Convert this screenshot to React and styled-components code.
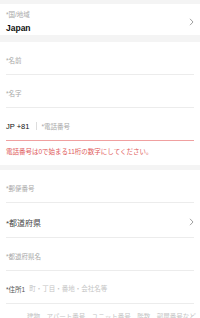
import React from "react";
import styled, { createGlobalStyle } from "styled-components";

const COLORS = {
  band: "#f4f4f4",
  line: "#ececec",
  label: "#a8a8a8",
  text: "#111",
  dark: "#444",
  placeholder: "#c4c4c4",
  red: "#e05a5a",
  redLine: "#f0a0a0",
};

const FONT = `"Liberation Sans", "Noto Sans CJK JP", sans-serif`;

const GlobalStyle = createGlobalStyle`
  html, body {
    margin: 0;
    padding: 0;
    background: #fff;
    font-family: ${FONT};
  }
`;

const Page = styled.div`
  width: 200px;
  height: 318px;
  overflow: hidden;
  background: #fff;
`;

const Band = styled.div`
  height: ${(p) => p.size}px;
  background: ${COLORS.band};
`;

const Section = styled.div`
  padding: 0 6px;
  background: #fff;
`;

const SelectRow = styled.div`
  display: flex;
  align-items: center;
  justify-content: space-between;
  height: 31px;
  padding-top: 5px;
  box-sizing: border-box;
`;

const Stack = styled.div`
  display: flex;
  flex-direction: column;
  gap: 4px;
`;

const SmallLabel = styled.span`
  font-size: 6.5px;
  line-height: 8px;
  color: ${COLORS.label};
`;

const Value = styled.span`
  font-size: 8.5px;
  line-height: 10px;
  font-weight: bold;
  color: ${COLORS.text};
`;

const Field = styled.div`
  display: flex;
  align-items: ${(p) => (p.top ? "flex-start" : "center")};
  gap: ${(p) => p.gap || 0}px;
  height: ${(p) => p.h || 33}px;
  padding-top: ${(p) => (p.top ? 9 : 4)}px;
  box-sizing: border-box;
  border-bottom: 1px solid ${(p) => (p.error ? COLORS.redLine : COLORS.line)};
`;

const Label = styled.span`
  font-size: ${(p) => (p.big ? 8 : 6.5)}px;
  color: ${(p) => (p.big ? COLORS.dark : p.mid ? "#555" : COLORS.label)};
  white-space: nowrap;
`;

const Placeholder = styled.span`
  font-size: 6.5px;
  line-height: 8px;
  color: ${COLORS.placeholder};
  white-space: nowrap;
  padding-left: ${(p) => p.indent || 0}px;
`;

const Prefix = styled.span`
  font-size: 7.5px;
  color: ${COLORS.text};
`;

const Divider = styled.span`
  width: 1px;
  height: 8px;
  background: #ddd;
  margin: 0 4px 0 7px;
`;

const Spacer = styled.div`
  flex: 1;
`;

const ErrorText = styled.div`
  font-size: 6.5px;
  color: ${COLORS.red};
  padding: 5px 0 9px;
  white-space: nowrap;
`;

const Chevron = () => (
  <svg width="5" height="8" viewBox="0 0 5 8" fill="none">
    <path d="M1 0.8 L4 4 L1 7.2" stroke="#888" strokeWidth="0.8" />
  </svg>
);

export default function App() {
  return (
    <>
      <GlobalStyle />
      <Page>
        <Band size={4} />
        <Section>
          <SelectRow>
            <Stack>
              <SmallLabel>*国/地域</SmallLabel>
              <Value>Japan</Value>
            </Stack>
            <Chevron />
          </SelectRow>
        </Section>
        <Band size={7} />
        <Section>
          <Field>
            <Label>*名前</Label>
          </Field>
          <Field>
            <Label>*名字</Label>
          </Field>
          <Field error h={33}>
            <Prefix>JP +81</Prefix>
            <Divider />
            <Label>*電話番号</Label>
          </Field>
          <ErrorText>電話番号は0で始まる11桁の数字にしてください。</ErrorText>
        </Section>
        <Band size={5} />
        <Section>
          <Field>
            <Label>*郵便番号</Label>
          </Field>
          <Field h={35}>
            <Label big>*都道府県</Label>
            <Spacer />
            <Chevron />
          </Field>
          <Field>
            <Label>*都道府県名</Label>
          </Field>
          <Field gap={4}>
            <Label mid>*住所1</Label>
            <Placeholder>町・丁目・番地・会社名等</Placeholder>
          </Field>
          <Field top>
            <Placeholder indent={21}>建物、アパート番号、ユニット番号、階数、部屋番号など</Placeholder>
          </Field>
        </Section>
      </Page>
    </>
  );
}
